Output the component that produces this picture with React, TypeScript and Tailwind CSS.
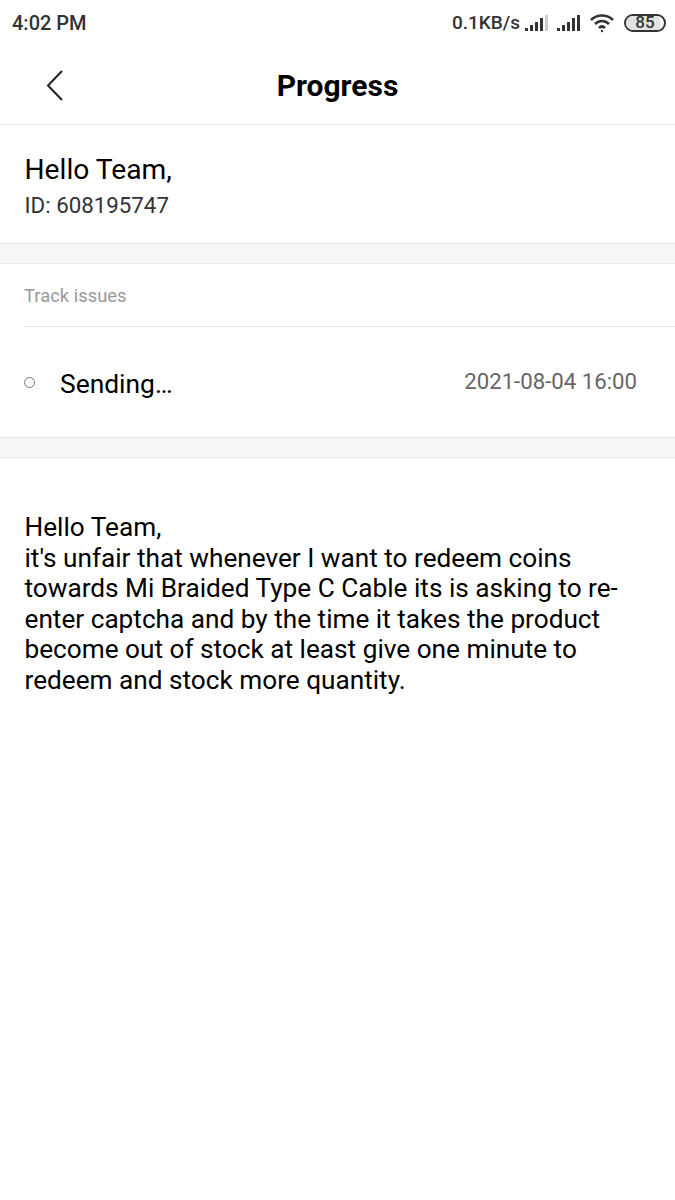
const App = () => {
  return (
    <div className="w-[675px] min-h-[1200px] bg-white font-['Roboto',sans-serif] text-black flex flex-col">
      {/* status bar */}
      <div className="h-[45px] pl-3 pr-[9px] flex items-center justify-between text-[#333]">
        <span className="text-[20px] font-medium leading-none">4:02 PM</span>
        <div className="flex items-center">
          <span className="text-[19px] font-medium leading-none">0.1KB/s</span>
          <svg width="26" height="18" viewBox="0 0 26 18" className="ml-[2px]">
            <rect x="3" y="14" width="3" height="3" fill="#333" />
            <rect x="8" y="11" width="3" height="6" fill="#333" />
            <rect x="13" y="8" width="3" height="9" fill="#333" />
            <rect x="18" y="4" width="3" height="13" fill="#333" />
            <rect x="23" y="1" width="3" height="16" fill="#ccc" />
          </svg>
          <svg width="26" height="18" viewBox="0 0 26 18" className="ml-[8px]">
            <rect x="1" y="14" width="3" height="3" fill="#333" />
            <rect x="6" y="11" width="3" height="6" fill="#333" />
            <rect x="11" y="8" width="3" height="9" fill="#333" />
            <rect x="16" y="4" width="3" height="13" fill="#333" />
            <rect x="21" y="1" width="3" height="16" fill="#333" />
          </svg>
          <svg width="26" height="20" viewBox="0 0 26 20" fill="none" stroke="#333" strokeWidth="2.6" className="ml-[7px]">
            <path d="M2 7 C8 1 18 1 24 7" />
            <path d="M6 11 C10 7 16 7 20 11" />
            <path d="M10 15 C12 13 14 13 16 15" />
            <circle cx="13" cy="18" r="1.2" fill="#333" stroke="none" />
          </svg>
          <div className="ml-[9px] relative w-[42px] h-[18px] rounded-[9px] border-2 border-[#333] overflow-hidden flex items-center justify-center">
            <div className="absolute left-0 top-0 bottom-0 w-[34px] bg-[#e2e2e2]" />
            <span className="relative text-[17px] font-medium leading-none">85</span>
          </div>
        </div>
      </div>

      {/* header */}
      <div className="relative h-[80px] flex items-center justify-center border-b border-[#e5e5e5]">
        <svg width="18" height="32" viewBox="0 0 18 32" fill="none" stroke="#222" strokeWidth="2" className="absolute left-[46px] top-[25px]">
          <path d="M16 1 L2 15.5 L16 30" />
        </svg>
        <span className="text-[30px] font-bold leading-none mt-[3px]">Progress</span>
      </div>

      {/* greeting */}
      <div className="h-[118px] pl-[24.5px] pt-[29px]">
        <div className="text-[28.2px] leading-[32px]">Hello Team,</div>
        <div className="text-[22.3px] leading-[26px] mt-[6px] text-[#333]">ID: 608195747</div>
      </div>

      <div className="h-[21px] bg-[#f7f7f7] border-y border-[#e8e8e8]" />

      {/* track issues */}
      <div className="pl-[24px]">
        <div className="h-[63px] pt-[2px] flex items-center border-b border-[#e8e8e8] text-[18.4px] text-[#999]">Track issues</div>
        <div className="h-[110px] flex items-center pr-[38px]">
          <div className="w-[11px] h-[11px] rounded-full border border-[#777]" />
          <span className="ml-[25px] text-[26.4px] leading-none mt-[5px]">Sending…</span>
          <span className="ml-auto text-[22.2px] leading-none text-[#666] -mt-[1px]">2021-08-04 16:00</span>
        </div>
      </div>

      <div className="h-[21px] bg-[#f7f7f7] border-y border-[#e8e8e8]" />

      {/* message */}
      <div className="pl-[24.5px] pt-[54px] text-[26.2px] leading-[30.5px] text-black">
        Hello Team,
        <br />
        it's unfair that whenever I want to redeem coins
        <br />
        towards Mi Braided Type C Cable its is asking to re-
        <br />
        enter captcha and by the time it takes the product
        <br />
        become out of stock at least give one minute to
        <br />
        redeem and stock more quantity.
      </div>
    </div>
  );
};

export default App;
